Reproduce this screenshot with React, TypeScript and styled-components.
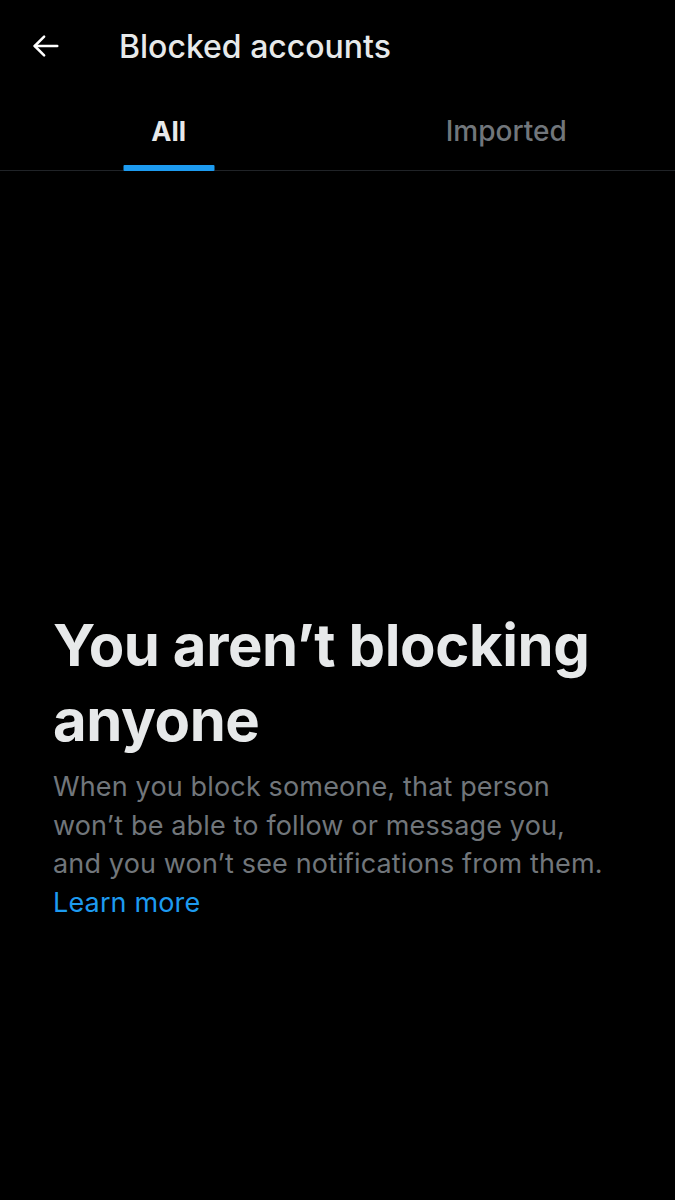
import styled, { createGlobalStyle } from 'styled-components'

const GlobalStyle = createGlobalStyle`
    html, body {
        margin: 0;
        padding: 0;
        background: #000000;
    }
    * {
        box-sizing: border-box;
    }
`

const Screen = styled.div`
    width: 675px;
    height: 1200px;
    background: #000000;
    font-family: Inter, Roboto, 'Liberation Sans', sans-serif;
    display: flex;
    flex-direction: column;
    overflow: hidden;
`

const TopBar = styled.header`
    height: 92px;
    display: flex;
    align-items: center;
    padding: 0 0 0 30px;
    gap: 57px;
`

const BackButton = styled.button`
    width: 32px;
    height: 32px;
    padding: 0;
    border: none;
    background: transparent;
    display: flex;
    align-items: center;
    justify-content: center;
    color: #ffffff;
`

const Title = styled.h1`
    margin: 0;
    font-size: 32px;
    font-weight: 500;
    color: #e7e9ea;
`

const Tabs = styled.nav`
    display: grid;
    grid-template-columns: 1fr 1fr;
    height: 79px;
    border-bottom: 1.5px solid #202327;
`

const Tab = styled.div<{ $active?: boolean }>`
    position: relative;
    display: flex;
    align-items: center;
    justify-content: center;
    font-size: ${(p) => (p.$active ? 27 : 28)}px;
    font-weight: ${(p) => (p.$active ? 700 : 500)};
    color: ${(p) => (p.$active ? '#e7e9ea' : '#71767b')};

    &::after {
        content: '';
        display: ${(p) => (p.$active ? 'block' : 'none')};
        position: absolute;
        bottom: -1px;
        left: 50%;
        transform: translateX(-50%);
        width: 91px;
        height: 6px;
        border-radius: 1px;
        background: #1d9bf0;
    }
`

const Empty = styled.section`
    flex: 1;
    display: flex;
    flex-direction: column;
    padding: 437px 30px 0 53px;
`

const Heading = styled.h2`
    margin: 0;
    font-size: 58px;
    line-height: 75px;
    font-weight: 700;
    color: #e7e9ea;
    letter-spacing: -0.4px;
`

const Body = styled.p`
    margin: 10px 0 0;
    font-size: 27px;
    line-height: 38.5px;
    letter-spacing: 0.15px;
    color: #71767b;
`

const LearnMore = styled.a`
    color: #1d9bf0;
    text-decoration: none;
`

function ArrowLeft() {
    return (
        <svg width="30" height="30" viewBox="0 0 24 24" fill="none" stroke="currentColor" strokeWidth="2" strokeLinecap="round" strokeLinejoin="round">
            <path d="M21 12H3" />
            <path d="M10.5 4.5L3 12L10.5 19.5" />
        </svg>
    )
}

export default function App() {
    return (
        <>
            <GlobalStyle />
            <Screen>
                <TopBar>
                    <BackButton aria-label="Back">
                        <ArrowLeft />
                    </BackButton>
                    <Title>Blocked accounts</Title>
                </TopBar>
                <Tabs>
                    <Tab $active>All</Tab>
                    <Tab>Imported</Tab>
                </Tabs>
                <Empty>
                    <Heading>You aren’t blocking anyone</Heading>
                    <Body>
                        When you block someone, that person
                        <br />
                        won’t be able to follow or message you,
                        <br />
                        and you won’t see notifications from them.
                        <br />
                        <LearnMore href="#">Learn more</LearnMore>
                    </Body>
                </Empty>
            </Screen>
        </>
    )
}
